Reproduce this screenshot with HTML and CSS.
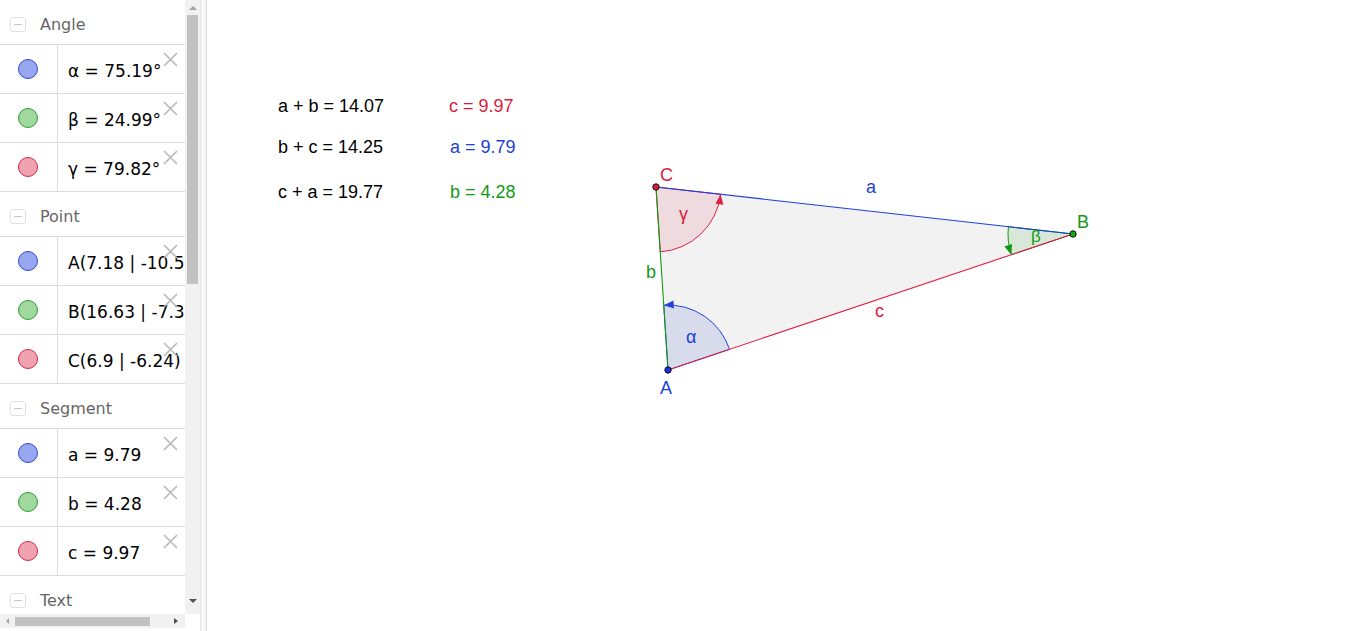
FILE: index.html
```html
<!DOCTYPE html>
<html>
<head>
<meta charset="utf-8">
<title>Triangle</title>
<link rel="stylesheet" href="styles.css">
</head>
<body>
<div class="app">
  <aside class="algebra">
    <div class="av-main">
      <div class="av-list">
        <div class="group-head"><span class="toggle"></span><span class="group-title">Angle</span></div>
        <div class="item"><div class="marble"><span class="dot blue"></span></div><div class="formula">α = 75.19°</div><svg class="close" viewBox="0 0 15 15"><path d="M1 1L14 14M14 1L1 14"/></svg></div>
        <div class="item"><div class="marble"><span class="dot green"></span></div><div class="formula">β = 24.99°</div><svg class="close" viewBox="0 0 15 15"><path d="M1 1L14 14M14 1L1 14"/></svg></div>
        <div class="item"><div class="marble"><span class="dot red"></span></div><div class="formula">γ = 79.82°</div><svg class="close" viewBox="0 0 15 15"><path d="M1 1L14 14M14 1L1 14"/></svg></div>
        <div class="group-head"><span class="toggle"></span><span class="group-title">Point</span></div>
        <div class="item"><div class="marble"><span class="dot blue"></span></div><div class="formula">A(7.18 | -10.55)</div><svg class="close" viewBox="0 0 15 15"><path d="M1 1L14 14M14 1L1 14"/></svg></div>
        <div class="item"><div class="marble"><span class="dot green"></span></div><div class="formula">B(16.63 | -7.38)</div><svg class="close" viewBox="0 0 15 15"><path d="M1 1L14 14M14 1L1 14"/></svg></div>
        <div class="item"><div class="marble"><span class="dot red"></span></div><div class="formula">C(6.9 | -6.24)</div><svg class="close" viewBox="0 0 15 15"><path d="M1 1L14 14M14 1L1 14"/></svg></div>
        <div class="group-head"><span class="toggle"></span><span class="group-title">Segment</span></div>
        <div class="item"><div class="marble"><span class="dot blue"></span></div><div class="formula">a = 9.79</div><svg class="close" viewBox="0 0 15 15"><path d="M1 1L14 14M14 1L1 14"/></svg></div>
        <div class="item"><div class="marble"><span class="dot green"></span></div><div class="formula">b = 4.28</div><svg class="close" viewBox="0 0 15 15"><path d="M1 1L14 14M14 1L1 14"/></svg></div>
        <div class="item"><div class="marble"><span class="dot red"></span></div><div class="formula">c = 9.97</div><svg class="close" viewBox="0 0 15 15"><path d="M1 1L14 14M14 1L1 14"/></svg></div>
        <div class="group-head"><span class="toggle"></span><span class="group-title">Text</span></div>
      </div>
      <div class="vscroll">
        <div class="vbtn"><span class="arr-up"></span></div>
        <div class="vthumb"></div>
        <div class="vspace"></div>
        <div class="vbtn vbtn-down"><span class="arr-down"></span></div>
      </div>
    </div>
    <div class="hscroll">
      <div class="hbtn"><span class="arr-left"></span></div>
      <div class="hthumb"></div>
      <div class="hspace"></div>
      <div class="hbtn"><span class="arr-right"></span></div>
    </div>
  </aside>
  <div class="divider"></div>
  <main class="canvas">
    <svg class="graphics" width="1159" height="631" viewBox="207 0 1159 631">
      <g class="txt">
        <text x="278" y="112">a + b = 14.07</text>
        <text x="449" y="112" class="c-red">c = 9.97</text>
        <text x="278" y="153">b + c = 14.25</text>
        <text x="450" y="153" class="c-blue">a = 9.79</text>
        <text x="278" y="198">c + a = 19.77</text>
        <text x="450" y="198" class="c-green">b = 4.28</text>
      </g>
      <polygon points="668,370 1073,234 656,187" fill="rgba(0,0,0,0.05)"/>
      <path d="M668 370 L729.6 349.3 A65 65 0 0 0 663.75 305.14 Z" fill="rgba(40,70,200,0.13)" stroke="#2244dd" stroke-width="1"/>
      <path d="M1073 234 L1008.41 226.72 A65 65 0 0 0 1011.38 254.69 Z" fill="rgba(0,140,0,0.1)" stroke="#119911" stroke-width="1"/>
      <path d="M656 187 L660.25 251.86 A65 65 0 0 0 720.59 194.28 Z" fill="rgba(220,20,60,0.1)" stroke="#dd2244" stroke-width="1"/>
      <polygon points="663.75,305.14 673.47,300.5 673.99,308.48" fill="#2244dd"/>
      <polygon points="1011.38,254.69 1004.41,246.48 1011.99,243.94" fill="#119911"/>
      <polygon points="720.59,194.28 723.45,204.67 715.49,203.77" fill="#dd2244"/>
      <line x1="656" y1="187" x2="1073" y2="234" stroke="#1a3ee0" stroke-width="1.1"/>
      <line x1="656" y1="187" x2="668" y2="370" stroke="#119911" stroke-width="1.1"/>
      <line x1="668" y1="370" x2="1073" y2="234" stroke="#dd2244" stroke-width="1.1"/>
      <circle cx="668" cy="370" r="3.2" fill="#1a2ee8" stroke="#111" stroke-width="1"/>
      <circle cx="1073" cy="234" r="3.2" fill="#11aa11" stroke="#111" stroke-width="1"/>
      <circle cx="656" cy="187" r="3.2" fill="#dd1f3f" stroke="#111" stroke-width="1"/>
      <g class="lbl">
        <text x="660" y="181" class="c-red">C</text>
        <text x="1077" y="228" class="c-green">B</text>
        <text x="660" y="394" class="c-blue">A</text>
        <text x="866" y="193" class="c-blue">a</text>
        <text x="646" y="278" class="c-green">b</text>
        <text x="875" y="317" class="c-red">c</text>
        <text x="679" y="220" class="c-red">γ</text>
        <text x="1031" y="242" class="c-green small">β</text>
        <text x="686" y="343" class="c-blue">α</text>
      </g>
    </svg>
  </main>
</div>
</body>
</html>
```

FILE: styles.css
```css
html, body {
  margin: 0;
  padding: 0;
  background: #fff;
  overflow: hidden;
}

.app {
  display: flex;
  width: 1366px;
  height: 631px;
}

.algebra {
  width: 200px;
  display: flex;
  flex-direction: column;
  flex: none;
}

.av-main {
  display: flex;
  height: 614px;
}

.av-list {
  width: 185px;
  height: 614px;
  overflow: hidden;
  flex: none;
}

.group-head {
  height: 39px;
  padding-top: 5px;
  border-bottom: 1px solid #dcdcdc;
  display: flex;
  align-items: center;
  padding-left: 10px;
  gap: 14px;
  box-sizing: content-box;
}

.toggle {
  width: 14px;
  height: 13px;
  border: 1px solid #e2e2e2;
  border-radius: 3px;
  display: flex;
  align-items: center;
  justify-content: center;
}

.toggle::before {
  content: "";
  width: 8px;
  height: 1px;
  background: #c4c4c4;
}

.group-title {
  font-family: "DejaVu Sans", sans-serif;
  font-size: 16px;
  color: #666;
  line-height: 20px;
}

.item {
  position: relative;
  height: 48px;
  border-bottom: 1px solid #dcdcdc;
  display: flex;
  overflow: hidden;
}

.marble {
  width: 58px;
  flex: none;
  border-right: 1px solid #dcdcdc;
  display: flex;
  justify-content: center;
  padding-top: 14px;
  padding-right: 2px;
  box-sizing: border-box;
}

.dot {
  width: 18px;
  height: 18px;
  border-radius: 50%;
  border: 1px solid;
}

.dot.blue { background: #98a7f0; border-color: #2c48d8; }
.dot.green { background: #a0d8a0; border-color: #2aa02a; }
.dot.red { background: #f0a2b0; border-color: #d42848; }

.formula {
  font-family: "DejaVu Sans", sans-serif;
  font-size: 17px;
  color: #000;
  white-space: nowrap;
  padding-left: 10px;
  padding-top: 13px;
  line-height: 26px;
}

.close {
  position: absolute;
  left: 163px;
  top: 7px;
  width: 15px;
  height: 15px;
}

.close path {
  stroke: #b8b8b8;
  stroke-width: 1.6;
  fill: none;
}

.vscroll {
  width: 15px;
  flex: none;
  background: #f1f1f1;
  display: flex;
  flex-direction: column;
}

.vbtn {
  height: 15px;
  display: flex;
  justify-content: center;
  align-items: center;
  flex: none;
}

.vbtn-down {
  height: 19px;
  align-items: flex-start;
  padding-top: 4px;
  box-sizing: border-box;
}

.arr-up {
  width: 0;
  height: 0;
  border-left: 4px solid transparent;
  border-right: 4px solid transparent;
  border-bottom: 4px solid #a3a3a3;
  margin-left: 1px;
}

.arr-down {
  width: 0;
  height: 0;
  border-left: 4px solid transparent;
  border-right: 4px solid transparent;
  border-top: 4px solid #505050;
  margin-left: 1px;
}

.vthumb {
  height: 269px;
  margin: 0 2px 0 2px;
  background: #c1c1c1;
  flex: none;
}

.vspace { flex: 1; }

.hscroll {
  width: 185px;
  height: 14px;
  background: #f1f1f1;
  display: flex;
  align-items: center;
}

.hbtn {
  width: 15px;
  height: 14px;
  display: flex;
  align-items: center;
  justify-content: center;
  flex: none;
}

.arr-left {
  width: 0;
  height: 0;
  border-top: 3.5px solid transparent;
  border-bottom: 3.5px solid transparent;
  border-right: 3.5px solid #a3a3a3;
  margin-left: -1px;
}

.arr-right {
  width: 0;
  height: 0;
  border-top: 3.5px solid transparent;
  border-bottom: 3.5px solid transparent;
  border-left: 4px solid #505050;
  margin-left: -3px;
}

.hthumb {
  width: 135px;
  height: 9px;
  background: #c1c1c1;
  flex: none;
  margin-top: 1px;
}

.hspace { flex: 1; }

.divider {
  width: 5px;
  flex: none;
  background: #f8f8f8;
  border-left: 1px solid #e4e4e4;
  border-right: 1px solid #dadada;
}

.canvas {
  flex: 1;
  background: #fff;
  overflow: hidden;
}

.graphics {
  display: block;
}

.txt text {
  font-family: "Liberation Sans", Arial, sans-serif;
  font-size: 18px;
  fill: #000;
}

.lbl text {
  font-family: "Liberation Sans", Arial, sans-serif;
  font-size: 18px;
}

.lbl text.small { font-size: 17px; }

.txt text.c-red, .lbl .c-red { fill: #d81b3c; }
.txt text.c-blue, .lbl .c-blue { fill: #1c3fd6; }
.txt text.c-green, .lbl .c-green { fill: #139913; }
```
